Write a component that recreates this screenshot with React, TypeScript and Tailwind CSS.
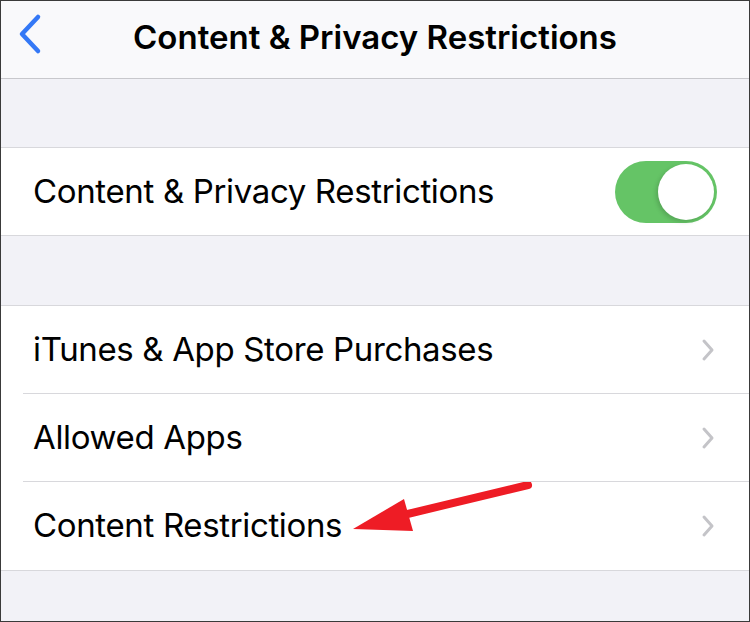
const font = { fontFamily: "Inter, 'Liberation Sans', sans-serif" };

const Chevron = () => (
  <svg width="16" height="24" viewBox="0 0 16 24" className="shrink-0">
    <path d="M4 3 L12 12 L4 21" fill="none" stroke="#c4c4c8" strokeWidth="3" strokeLinecap="round" strokeLinejoin="round" />
  </svg>
);

const Row = ({ label, last }: { label: string; last?: boolean }) => (
  <div className="flex h-[88px] pl-[22px] bg-white">
    <div className={`flex-1 flex items-center justify-between pl-[10px] pr-[33px] ${last ? "" : "border-b border-[#d8d8dc]"}`}>
      <span className="text-[33px] tracking-[-0.35px] text-black">{label}</span>
      <Chevron />
    </div>
  </div>
);

export default function App() {
  return (
    <div className="w-[750px] h-[622px] border border-[#3a3a3a] bg-[#f2f2f7] flex flex-col overflow-hidden" style={font}>
      <div className="relative h-[78px] shrink-0 bg-[#f9f9fb] border-b border-[#c8c8cc] flex items-center justify-center">
        <svg width="30" height="44" viewBox="0 0 30 44" className="absolute left-[12px] top-[11px]">
          <path d="M25 5 L9 22 L25 39" fill="none" stroke="#3478f6" strokeWidth="4.5" strokeLinecap="round" strokeLinejoin="round" />
        </svg>
        <h1 className="text-[33px] font-semibold text-black -mt-[3px]">Content &amp; Privacy Restrictions</h1>
      </div>
      <div className="h-[68px] shrink-0" />
      <div className="h-[89px] shrink-0 bg-white border-y border-[#d8d8dc] flex items-center justify-between pl-[32px] pr-[32px]">
        <span className="text-[33px] tracking-[-0.35px] text-black">Content &amp; Privacy Restrictions</span>
        <div className="w-[102px] h-[62px] rounded-full bg-[#65c466] flex items-center justify-end pr-[3px]">
          <div className="w-[56px] h-[56px] rounded-full bg-white shadow-[-2px_2px_4px_rgba(0,0,0,0.15)]" />
        </div>
      </div>
      <div className="h-[69px] shrink-0" />
      <div className="relative shrink-0 border-y border-[#d8d8dc]">
        <Row label="iTunes & App Store Purchases" />
        <Row label="Allowed Apps" />
        <Row label="Content Restrictions" last />
        <svg width="750" height="270" viewBox="0 0 750 270" className="absolute left-[-1px] pointer-events-none" style={{ top: 176 }}>
          <g transform="translate(0,-482)">
            <line x1="528" y1="485" x2="395" y2="517" stroke="#ee1c25" strokeWidth="8" strokeLinecap="round" />
            <polygon points="353,529 404,499 413,531" fill="#ee1c25" />
          </g>
        </svg>
      </div>
    </div>
  );
}
